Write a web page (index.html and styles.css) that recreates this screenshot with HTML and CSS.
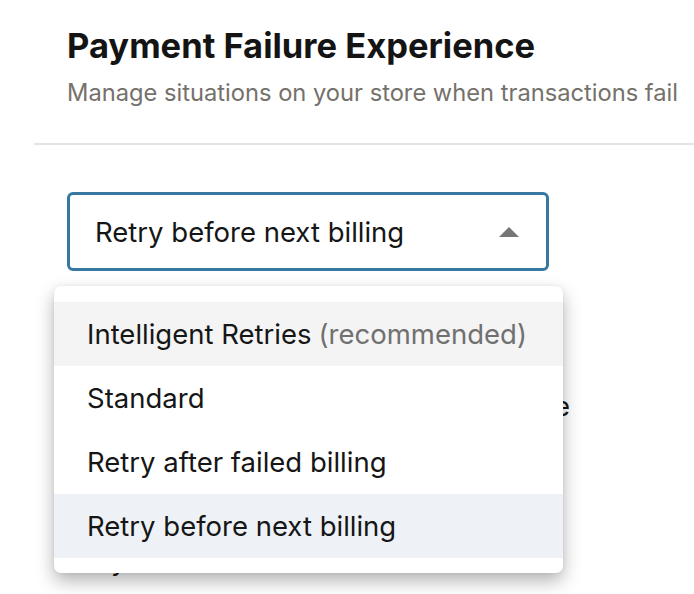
FILE: index.html
```html
<!DOCTYPE html>
<html>
<head>
<meta charset="utf-8">
<link rel="stylesheet" href="styles.css">
</head>
<body>
<header class="header">
  <h1 class="title">Payment Failure Experience</h1>
  <p class="subtitle">Manage situations on your store when transactions fail</p>
</header>
<div class="divider"></div>
<section class="content">
  <div class="select-wrap">
    <div class="select">
      <span class="select-value">Retry before next billing</span>
      <span class="caret"></span>
    </div>
    <ul class="menu">
      <li class="option hover">Intelligent Retries <span class="muted">(recommended)</span></li>
      <li class="option">Standard</li>
      <li class="option">Retry after failed billing</li>
      <li class="option selected">Retry before next billing</li>
    </ul>
  </div>
  <div class="behind">
    <p class="behind-line right">Retry before the due date</p>
    <p class="behind-line">Only once before the renewal</p>
  </div>
</section>
</body>
</html>
```
FILE: styles.css
```css
* { box-sizing: border-box; }
html, body { margin: 0; padding: 0; background: #fff; }
body {
  font-family: "Inter", "Noto Sans", sans-serif;
  color: #161616;
  width: 694px;
  height: 594px;
  overflow: hidden;
}
.header { padding: 24px 0 0 67px; }
.title {
  margin: 0;
  font-size: 34.5px;
  line-height: 44px;
  font-weight: 700;
  color: #141414;
}
.subtitle {
  margin: 10px 0 0;
  font-size: 23.7px;
  line-height: 30px;
  color: #75716b;
}
.divider {
  margin: 35px 0 0 34px;
  height: 2px;
  background: #e4e4e4;
}
.content { padding: 47px 0 0 67px; }
.select-wrap { position: relative; width: 482px; }
.select {
  height: 79px;
  border: 3px solid #3678a2;
  border-radius: 6px;
  display: flex;
  align-items: center;
  justify-content: space-between;
  padding: 0 27px 0 25px;
}
.select-value { font-size: 27.5px; color: #161616; }
.caret {
  width: 0; height: 0;
  border-left: 10px solid transparent;
  border-right: 10px solid transparent;
  border-bottom: 10px solid #767676;
}
.menu {
  position: absolute;
  left: -13px;
  top: 94px;
  width: 509px;
  margin: 0;
  padding: 16px 0 15px;
  list-style: none;
  background: #fff;
  border-radius: 7px;
  box-shadow: 0 8px 18px rgba(0,0,0,0.3), 0 0 4px rgba(0,0,0,0.06);
  z-index: 2;
}
.option {
  height: 64px;
  display: flex;
  align-items: center;
  padding-left: 33px;
  font-size: 27.5px;
  color: #161616;
}
.option.hover { background: #f4f4f4; }
.option.selected { background: #eef2f6; }
.muted { color: #707070; margin-left: 7px; }
.behind { padding-top: 120px; width: 503px; }
.behind-line { margin: 0; font-size: 27.5px; line-height: 30px; white-space: nowrap; }
.behind-line.right { text-align: right; }
.behind-line + .behind-line { margin-top: 124px; }
```
